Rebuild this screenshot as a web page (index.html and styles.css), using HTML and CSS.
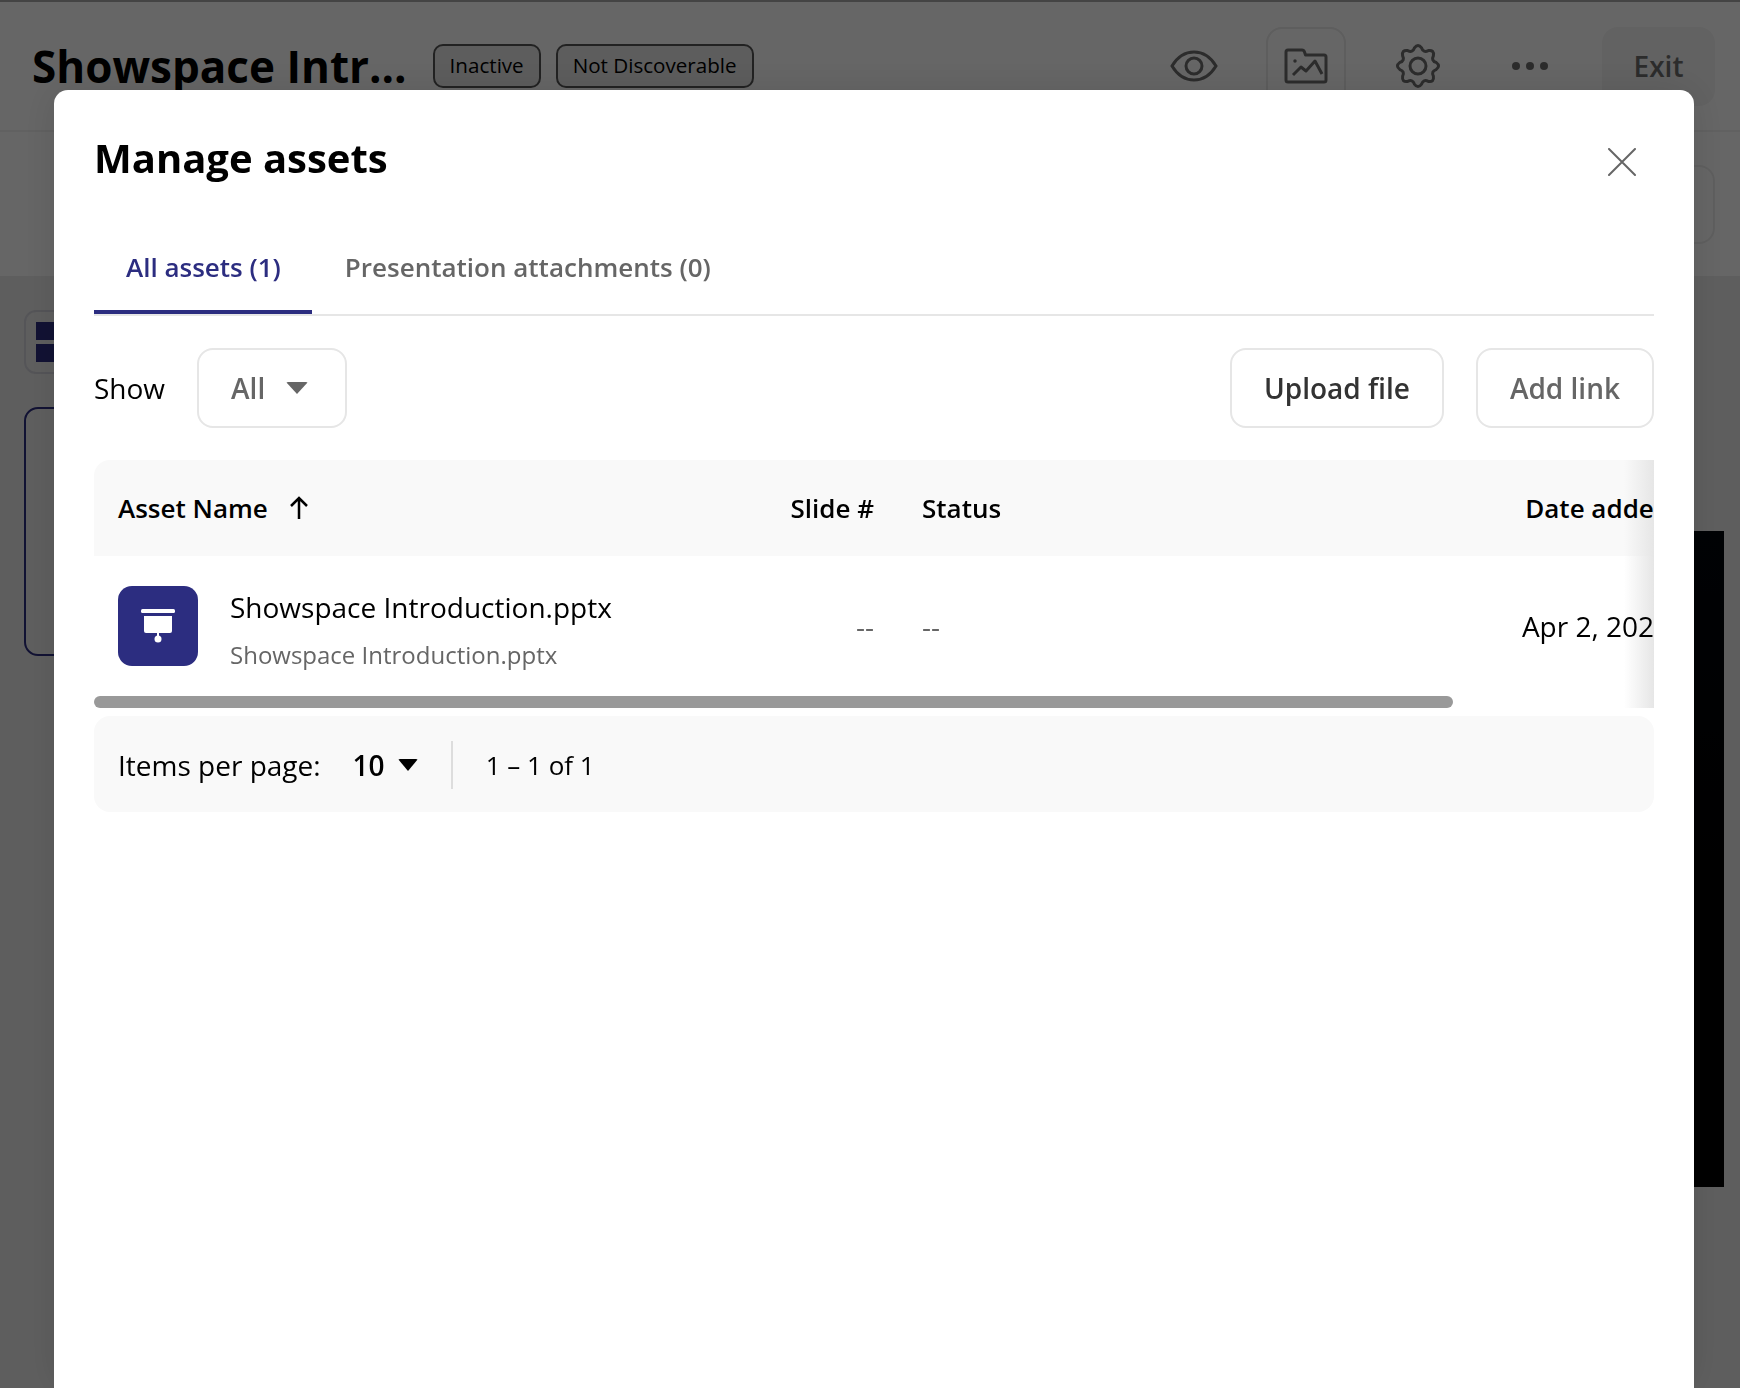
FILE: index.html
```html
<!DOCTYPE html>
<html lang="en">
<head>
  <meta charset="UTF-8" />
  <title>Manage assets</title>
  <link rel="stylesheet" href="styles.css">
</head>
<body>
  <!-- Page behind the dialog -->
  <div class="app">
    <header class="app-header">
      <h1 class="app-title">Showspace Intr...</h1>
      <span class="badge">Inactive</span>
      <span class="badge">Not Discoverable</span>
      <div class="header-actions">
        <div class="action">
          <svg width="48" height="32" viewBox="0 0 48 32" fill="none" stroke="#6e6e6e" stroke-width="3">
            <path d="M2 16C8 6 16 2 24 2s16 4 22 14c-6 10-14 14-22 14S8 26 2 16Z"/>
            <circle cx="24" cy="16" r="8"/>
          </svg>
        </div>
        <div class="action action-boxed">
          <svg width="44" height="36" viewBox="0 0 44 36" fill="none" stroke="#6e6e6e" stroke-width="3" stroke-linejoin="round">
            <path d="M4 2h14c1.500 0 2 .5 2.500 2l1 3H40c1.500 0 2 1 2 2v23c0 1.500-1 2-2 2H4c-1.500 0-2-.5-2-2V4c0-1.500.5-2 2-2Z"/>
            <path d="M9 27l8-8 5 4 9-10 7 13"/>
            <circle cx="11" cy="13" r="1" fill="#6e6e6e" stroke-width="1.500"/>
          </svg>
        </div>
        <div class="action">
          <svg width="48" height="48" viewBox="0 0 48 48" fill="none" stroke="#6e6e6e" stroke-width="3">
            <path d="M20.400 5.900Q24 1 27.600 5.900Q29.400 11.100 34.300 8.600Q40.300 7.700 39.400 13.700Q36.900 18.600 42.100 20.400Q47 24 42.100 27.600Q36.900 29.400 39.400 34.300Q40.300 40.300 34.300 39.400Q29.400 36.900 27.600 42.100Q24 47 20.400 42.100Q18.600 36.900 13.700 39.400Q7.700 40.300 8.600 34.300Q11.100 29.400 5.900 27.600Q1 24 5.900 20.400Q11.100 18.600 8.600 13.700Q7.700 7.700 13.700 8.600Q18.600 11.100 20.400 5.900Z"/>
            <circle cx="24" cy="24" r="8"/>
          </svg>
        </div>
        <div class="action">
          <svg width="38" height="10" viewBox="0 0 38 10" fill="#6e6e6e">
            <circle cx="5" cy="5" r="4"/><circle cx="19" cy="5" r="4"/><circle cx="33" cy="5" r="4"/>
          </svg>
        </div>
        <div class="exit-btn">Exit</div>
      </div>
    </header>
    <div class="app-toolbar">
      <div class="toolbar-btn"></div>
    </div>
    <main class="app-main">
      <aside class="side">
        <div class="view-toggle">
          <span class="toggle-cell"></span>
          <span class="toggle-cell"></span>
        </div>
        <div class="slide-thumb"></div>
      </aside>
      <div class="stage"></div>
    </main>
  </div>

  <!-- Dialog -->
  <div class="overlay">
    <section class="modal">
      <div class="modal-head">
        <h2 class="modal-title">Manage assets</h2>
        <svg class="modal-close" width="28" height="28" viewBox="0 0 28 28" stroke="#666" stroke-width="2" stroke-linecap="round">
          <path d="M1 1l26 26M27 1L1 27"/>
        </svg>
      </div>

      <nav class="tabs">
        <div class="tab tab-active">All assets (1)</div>
        <div class="tab tab-second">Presentation attachments (0)</div>
      </nav>

      <div class="filters">
        <span class="filter-label">Show</span>
        <div class="select">All <span class="caret"></span></div>
        <div class="btn btn-upload">Upload file</div>
        <div class="btn btn-link">Add link</div>
      </div>

      <div class="table-wrap">
        <div class="table-inner">
          <div class="table-row table-head">
            <div class="cell-name">Asset Name
              <svg width="20" height="24" viewBox="0 0 20 24" fill="none" stroke="#000" stroke-width="2.500">
                <path d="M10 23V2M2 10l8-8 8 8"/>
              </svg>
            </div>
            <div class="cell-slide">Slide #</div>
            <div>Status</div>
            <div class="cell-date">Date added</div>
          </div>
          <div class="table-row table-body">
            <div class="cell-name">
              <div class="file-icon">
                <svg width="34" height="34" viewBox="0 0 34 34" fill="#fff">
                  <rect x="0" y="0" width="34" height="4" rx="1.500"/>
                  <path d="M3 7h28v15a2 2 0 0 1-2 2H5a2 2 0 0 1-2-2Z"/>
                  <rect x="16" y="24" width="2" height="4"/>
                  <circle cx="17" cy="30" r="3.500"/>
                </svg>
              </div>
              <div class="file-text">
                <div class="file-name">Showspace Introduction.pptx</div>
                <div class="file-sub">Showspace Introduction.pptx</div>
              </div>
            </div>
            <div class="cell-slide cell-muted">--</div>
            <div class="cell-muted">--</div>
            <div class="cell-date">Apr 2, 2025</div>
          </div>
        </div>
        <div class="scroll-track"><div class="scroll-thumb"></div></div>
        <div class="scroll-shade"></div>
      </div>

      <div class="pager">
        <span>Items per page:</span>
        <span class="pager-size">10</span>
        <span class="caret caret-dark"></span>
        <span class="pager-divider"></span>
        <span class="pager-range">1 – 1 of 1</span>
      </div>
    </section>
  </div>
</body>
</html>
```

FILE: styles.css
```css
* {
  margin: 0;
  padding: 0;
  box-sizing: border-box;
}
html, body {
  height: 100%;
  overflow: hidden;
}
body {
  font-family: "Open Sans", "Noto Sans", sans-serif;
  color: #000;
  background: #fff;
}

/* ---------- page behind the dialog ---------- */
.app {
  height: 100%;
  display: flex;
  flex-direction: column;
  border-top: 2px solid #aaa;
}
.app-header {
  height: 130px;
  display: flex;
  align-items: center;
  padding: 0 25px 0 32px;
  border-bottom: 2px solid #f2f2f2;
}
.app-title {
  font-size: 44px;
  font-weight: 700;
  margin-right: 26px;
  white-space: nowrap;
}
.badge {
  height: 44px;
  display: flex;
  align-items: center;
  padding: 0 15px 2px;
  margin-right: 15px;
  font-size: 20.600px;
  color: #000;
  background: #e8e8e8;
  border: 2px solid #555;
  border-radius: 10px;
  white-space: nowrap;
}
.header-actions {
  margin-left: auto;
  display: flex;
  align-items: center;
  gap: 34px;
}
.action {
  width: 78px;
  height: 79px;
  display: flex;
  align-items: center;
  justify-content: center;
}
.action-boxed {
  width: 80px;
  margin: 0 -1px;
  border: 2px solid #eaeaea;
  border-radius: 16px;
}
.exit-btn {
  width: 113px;
  height: 79px;
  display: flex;
  align-items: center;
  justify-content: center;
  font-size: 28px;
  font-weight: 600;
  color: #6e6e6e;
  background: #f5f5f5;
  border-radius: 16px;
  margin-left: -1px;
}
.app-toolbar {
  height: 146px;
  display: flex;
  align-items: center;
  justify-content: flex-end;
  padding-right: 25px;
  border-bottom: 2px solid #ececec;
}
.toolbar-btn {
  width: 120px;
  height: 79px;
  border: 2px solid #eee;
  border-radius: 16px;
}
.app-main {
  flex: 1;
  display: flex;
  justify-content: space-between;
  background: #ececec;
}
.side {
  padding: 32px 0 0 24px;
}
.view-toggle {
  width: 62px;
  height: 64px;
  padding: 10px;
  display: flex;
  flex-direction: column;
  gap: 4px;
  border: 2px solid #d4d4dc;
  border-radius: 12px;
}
.toggle-cell {
  flex: 1;
  background: #2c2d80;
}
.slide-thumb {
  width: 120px;
  height: 249px;
  margin-top: 33px;
  border: 2px solid #2c2d80;
  border-radius: 14px;
}
.stage {
  width: 300px;
  height: 656px;
  margin: 253px 16px 0 0;
  background: linear-gradient(#02060c, #000 60%);
}

/* ---------- dialog ---------- */
.overlay {
  position: fixed;
  inset: 0;
  padding: 90px 46px 0 54px;
  background: rgba(0, 0, 0, 0.6);
}
.modal {
  height: 100%;
  padding: 0 40px;
  background: #fff;
  border-radius: 14px 14px 0 0;
  box-shadow: 0 0 40px rgba(0, 0, 0, 0.12);
}
.modal-head {
  height: 130px;
  display: flex;
  justify-content: space-between;
  padding-top: 41px;
}
.modal-title {
  font-size: 40px;
  font-weight: 700;
  line-height: 54px;
}
.modal-close {
  margin: 17px 18px 0 0;
}
.tabs {
  height: 96px;
  display: flex;
  border-bottom: 2px solid #e6e6e6;
}
.tab {
  height: 94px;
  padding: 0 32px;
  display: flex;
  align-items: center;
  font-size: 26px;
  font-weight: 600;
  color: #666;
  white-space: nowrap;
}
.tab-active {
  padding: 4px 31px 0 32px;
  color: #2c2d80;
  border-bottom: 4px solid #2c2d80;
}
.tab-second {
  padding-left: 33px;
}
.filters {
  display: flex;
  align-items: center;
  margin-top: 32px;
  font-size: 28px;
}
.filter-label {
  margin-right: 32px;
}
.select, .btn {
  height: 80px;
  display: flex;
  align-items: center;
  border: 2px solid #e6e6e6;
  border-radius: 16px;
  color: #666;
  font-weight: 600;
}
.select {
  width: 150px;
  padding-left: 32px;
  gap: 21px;
}
.caret {
  width: 0;
  height: 0;
  border-left: 11px solid transparent;
  border-right: 11px solid transparent;
  border-top: 12px solid #666;
  border-radius: 2px;
}
.caret-dark {
  border-top-color: #000;
  border-left-width: 10.500px;
  border-right-width: 10.500px;
  margin-left: 13px;
}
.btn {
  padding: 0 32px;
}
.btn-upload {
  margin-left: auto;
  color: #333;
}
.btn-link {
  margin-left: 32px;
}

/* ---------- table ---------- */
.table-wrap {
  position: relative;
  margin-top: 32px;
  overflow: hidden;
  border-radius: 16px 0 0 0;
}
.table-inner {
  width: 1800px;
}
.table-row {
  display: grid;
  grid-template-columns: 640px 116px 48px 500px 370px;
  padding-left: 24px;
  align-items: center;
}
.table-row > :nth-child(3) {
  grid-column: 4;
}
.table-head {
  height: 96px;
  background: #f9f9f9;
  font-size: 26px;
  font-weight: 600;
}
.table-body {
  height: 140px;
  font-size: 28px;
}
.cell-name {
  display: flex;
  align-items: center;
  gap: 21px;
}
.table-body .cell-name {
  gap: 32px;
}
.cell-slide {
  text-align: right;
  white-space: nowrap;
}
.cell-muted {
  color: #666;
}
/* sits above the scroll shade, the column itself is cut by the wrap */
.cell-date {
  position: relative;
  z-index: 2;
  width: 170px;
  margin-left: 78px;
  text-align: right;
  white-space: nowrap;
}
.file-icon {
  width: 80px;
  height: 80px;
  display: flex;
  align-items: center;
  justify-content: center;
  background: #2c2d80;
  border-radius: 14px;
}
.file-text {
  padding-top: 6px;
}
.file-name {
  font-size: 28px;
  line-height: 38px;
}
.file-sub {
  margin-top: 13px;
  font-size: 24px;
  line-height: 32px;
  color: #666;
}
.scroll-track {
  height: 12px;
}
.scroll-thumb {
  width: 1359px;
  height: 12px;
  background: #999;
  border-radius: 6px;
}
.scroll-shade {
  position: absolute;
  z-index: 1;
  top: 0;
  right: 0;
  bottom: 0;
  width: 30px;
  background: linear-gradient(to right, rgba(230, 230, 230, 0), #e6e6e6);
}

/* ---------- pagination ---------- */
.pager {
  height: 96px;
  margin-top: 8px;
  padding: 1px 0 0 24px;
  display: flex;
  align-items: center;
  background: #f9f9f9;
  border-radius: 16px;
  font-size: 28px;
}
.pager-size {
  margin-left: 32px;
  font-weight: 600;
}
.pager-divider {
  width: 2px;
  height: 48px;
  margin: 0 33px 0 33px;
  background: #ddd;
}
.pager-range {
  font-size: 26px;
}
```
